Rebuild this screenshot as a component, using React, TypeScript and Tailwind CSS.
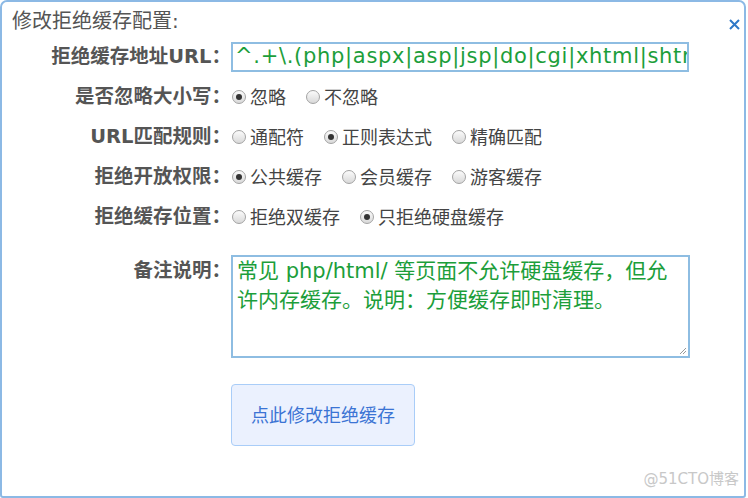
import React from "react";

const FONT = '"DejaVu Sans", "Noto Sans CJK SC", sans-serif';

function Radio({ checked, label }: { checked?: boolean; label: string }) {
  return (
    <span className="flex items-center mr-[19px]">
      <span className="ml-[1px] mr-[4px] w-[14px] h-[14px] rounded-full border border-[#a3a3a3] bg-gradient-to-b from-[#fbfbfb] to-[#d9d9d9] flex items-center justify-center">
        {checked && <span className="w-[6px] h-[6px] rounded-full bg-[#333]" />}
      </span>
      <span>{label}</span>
    </span>
  );
}

function Row({ label, children }: { label: React.ReactNode; children: React.ReactNode }) {
  return (
    <div className="flex items-center h-[40px]">
      <div className="w-[229px] text-right font-bold text-[#555] text-[19.5px]">{label}</div>
      <div className="flex items-center text-[18px] text-[#444]">{children}</div>
    </div>
  );
}

export default function App() {
  return (
    <div className="w-[748px] h-[498px] bg-white" style={{ fontFamily: FONT }}>
      <div className="w-[746px] h-[498px] border-2 border-[#8cb9e5] rounded-t-[7px] rounded-b-[3px] flex flex-col">
        <div className="h-[40px] flex items-start justify-between pl-[10px] pr-[4px] pt-[4px]">
          <span className="text-[20px] text-[#555]">修改拒绝缓存配置:</span>
          <svg width="11" height="11" viewBox="0 0 11 11" className="mt-[13px]">
            <path d="M1 1L10 10M10 1L1 10" stroke="#2e78c8" strokeWidth="2" />
          </svg>
        </div>
        <div className="flex items-center h-[30px]">
          <div className="w-[229px] text-right font-bold text-[#555] text-[19.5px]">拒绝缓存地址URL：</div>
          <div className="w-[458px] h-[30px] border-2 border-[#8ebde2] flex items-center pl-[2px] overflow-hidden whitespace-nowrap text-[21px] tracking-[0.7px] text-[#1c9e3a]">
            <span>^.+\.(php|aspx|asp|jsp|do|cgi|xhtml|shtml)$</span>
          </div>
        </div>
        <div className="h-[5px]" />
        <Row label="是否忽略大小写：">
          <Radio checked label="忽略" />
          <Radio label="不忽略" />
        </Row>
        <Row label="URL匹配规则：">
          <Radio label="通配符" />
          <Radio checked label="正则表达式" />
          <Radio label="精确匹配" />
        </Row>
        <Row label="拒绝开放权限：">
          <Radio checked label="公共缓存" />
          <Radio label="会员缓存" />
          <Radio label="游客缓存" />
        </Row>
        <Row label="拒绝缓存位置：">
          <Radio label="拒绝双缓存" />
          <Radio checked label="只拒绝硬盘缓存" />
        </Row>
        <div className="flex items-start mt-[18px]">
          <div className="w-[229px] text-right font-bold text-[#555] text-[19.5px] pt-[1px]">备注说明：</div>
          <div className="relative w-[459px] h-[103px] border-2 border-[#8ebde2] pl-[4px] pt-[0px] text-[21px] leading-[29px] text-[#1c9e3a]">
            常见 php/html/ 等页面不允许硬盘缓存，但允
            <br />
            许内存缓存。说明：方便缓存即时清理。
            <svg width="8" height="8" viewBox="0 0 8 8" className="absolute right-[1px] bottom-[1px]">
              <path d="M7 1L1 7M7 4L4 7" stroke="#999" strokeWidth="1" />
            </svg>
          </div>
        </div>
        <div className="flex mt-[26px] pl-[229px]">
          <div className="w-[184px] h-[62px] rounded-[4px] border border-[#a9cdf8] bg-[#ebf1fe] flex items-center justify-center text-[18px] text-[#3b74d4]">
            点此修改拒绝缓存
          </div>
        </div>
        <div className="flex-1 flex items-end justify-end pr-[5px] pb-[6px]">
          <span className="text-[15px] text-[#c8c8c8]">@51CTO博客</span>
        </div>
      </div>
    </div>
  );
}
